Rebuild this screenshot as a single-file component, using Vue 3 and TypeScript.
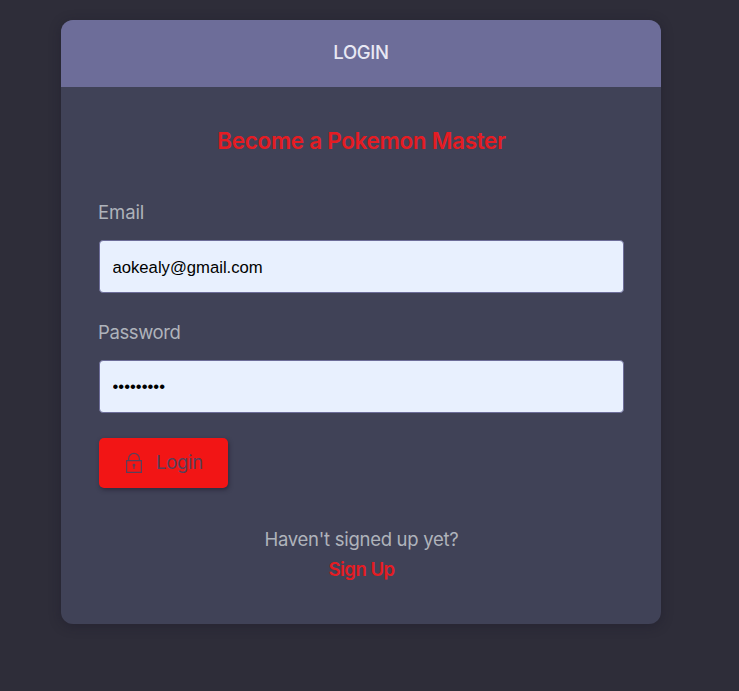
<script setup lang="ts">
import { ref } from 'vue'

const email = ref<string>('aokealy@gmail.com')
const password = ref<string>('pikachu25')
</script>

<template>
  <main class="page">
    <section class="card">
      <header class="card-header"><h1>LOGIN</h1></header>
      <div class="card-body">
        <h2>Become a Pokemon Master</h2>
        <form @submit.prevent>
          <label class="label-email" for="email">Email</label>
          <input id="email" v-model="email" type="email" autocomplete="off" />
          <label class="label-password" for="password">Password</label>
          <input id="password" v-model="password" type="password" autocomplete="off" />
          <button type="submit">
            <svg width="18" height="22" viewBox="0 0 18 22" fill="none" stroke="currentColor" stroke-width="1.2">
              <path d="M1.6 8.6h14.8v11.8H1.6zM3.6 8.6V6.8a5.4 5.4 0 0 1 10.8 0v1.8" />
              <path d="M9 13V17" />
              <circle cx="9" cy="13.2" r=".8" />
            </svg>
            <span>Login</span>
          </button>
        </form>
        <p class="prompt">Haven't signed up yet?</p>
        <a class="signup" href="#">Sign Up</a>
      </div>
    </section>
  </main>
</template>

<style>
body {
  background: #2e2d39;
}
</style>

<style scoped>
.page {
  box-sizing: border-box;
  height: 691px;
  padding: 20px 78px 67px 61px;
  overflow: hidden;
  background: #2e2d39;
  font-family: Inter, "Liberation Sans", sans-serif;
}
.card {
  height: 604px;
  border-radius: 12px;
  overflow: hidden;
  background: #404257;
  box-shadow: 0 2px 12px rgba(25, 22, 40, 0.4);
}
.card-header {
  height: 67px;
  display: flex;
  align-items: center;
  justify-content: center;
  background: #6d6d99;
}
h1 {
  margin: -4px 0 0;
  color: #e8e8f4;
  font-size: 18.5px;
  font-weight: 500;
  letter-spacing: -0.3px;
}
.card-body {
  padding: 38px 37px 0 38px;
  display: flex;
  flex-direction: column;
  align-items: center;
}
h2 {
  margin: 0;
  color: #e51c23;
  font-size: 22.5px;
  line-height: 32px;
  font-weight: 600;
  letter-spacing: -0.32px;
  white-space: nowrap;
}
form {
  width: 100%;
  margin-top: 40px;
  display: flex;
  flex-direction: column;
}
label {
  margin: 0 0 13px -1px;
  color: #afb3bb;
  font-size: 18.5px;
  line-height: 30px;
}
.label-email {
  letter-spacing: -0.1px;
}
.label-password {
  letter-spacing: -0.4px;
}
input {
  box-sizing: border-box;
  width: 100%;
  height: 53px;
  margin: 0;
  padding: 2px 13px 0 12.5px;
  border: 1px solid #6d6d99;
  border-radius: 4px;
  background: #e8f0fe;
  color: #000;
  font: 16.67px "Liberation Sans", Arial, sans-serif;
  outline: none;
}
#email {
  margin-bottom: 24px;
}
#password {
  padding-top: 0;
}
button {
  width: 129px;
  height: 50px;
  margin-top: 25px;
  padding: 0 0 0 26px;
  border: 0;
  border-radius: 5px;
  display: flex;
  align-items: center;
  gap: 13px;
  background: #f21515;
  box-shadow: 1px 2px 4px rgba(25, 22, 40, 0.5);
  color: #584059;
  font: 18.5px Inter, sans-serif;
  letter-spacing: -0.3px;
}
button span {
  margin-top: -2px;
}
.prompt {
  margin: 36px 0 0;
  color: #afb3bb;
  font-size: 18.5px;
  line-height: 30px;
  letter-spacing: -0.28px;
}
.signup {
  color: #e51c23;
  font-size: 18.5px;
  line-height: 30px;
  font-weight: 600;
  letter-spacing: -0.5px;
  text-decoration: none;
}
</style>
